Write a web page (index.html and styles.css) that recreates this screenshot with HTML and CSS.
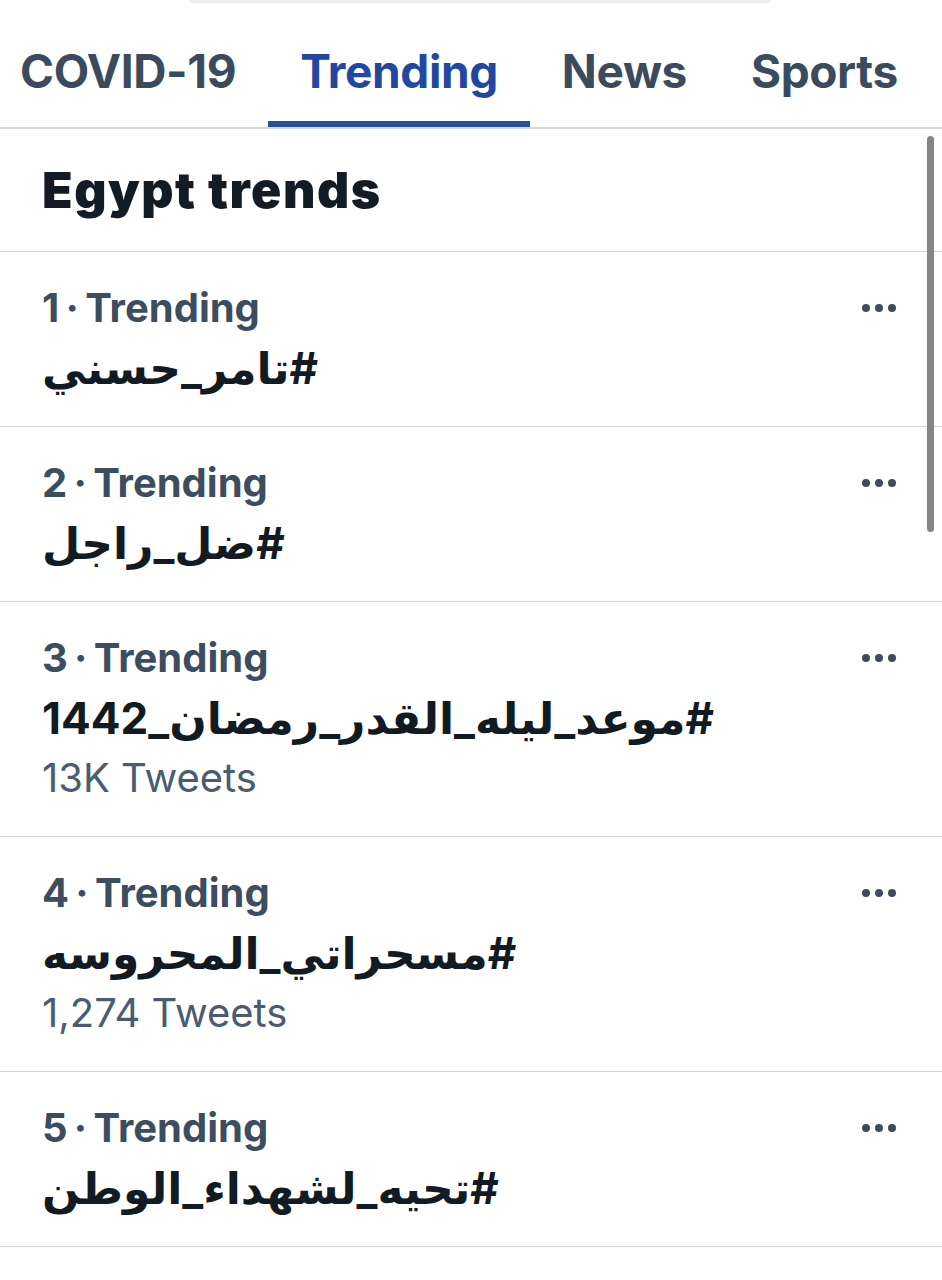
FILE: index.html
```html
<!DOCTYPE html>
<html lang="en">
<head>
<meta charset="utf-8">
<title>Trends</title>
<link rel="stylesheet" href="styles.css">
</head>
<body>
<div class="page">
  <div class="search-edge"></div>
  <nav class="tabs">
    <div class="tab first">COVID-19</div>
    <div class="tab active">Trending</div>
    <div class="tab">News</div>
    <div class="tab">Sports</div>
  </nav>
  <main class="content">
    <div class="scrollbar"></div>
    <h1 class="title">Egypt trends</h1>
    <section class="trend">
      <div class="trend-body">
        <div class="meta">1&#8201;·&#8201;Trending</div>
        <div class="tag"><bdi dir="rtl">#تامر_حسني</bdi></div>
      </div>
      <div class="more"><span></span><span></span><span></span></div>
    </section>
    <section class="trend">
      <div class="trend-body">
        <div class="meta">2&#8201;·&#8201;Trending</div>
        <div class="tag"><bdi dir="rtl">#ضل_راجل</bdi></div>
      </div>
      <div class="more"><span></span><span></span><span></span></div>
    </section>
    <section class="trend">
      <div class="trend-body">
        <div class="meta">3&#8201;·&#8201;Trending</div>
        <div class="tag"><bdi dir="rtl">#موعد_ليله_القدر_رمضان_1442</bdi></div>
        <div class="count">13K Tweets</div>
      </div>
      <div class="more"><span></span><span></span><span></span></div>
    </section>
    <section class="trend">
      <div class="trend-body">
        <div class="meta">4&#8201;·&#8201;Trending</div>
        <div class="tag"><bdi dir="rtl">#مسحراتي_المحروسه</bdi></div>
        <div class="count">1,274 Tweets</div>
      </div>
      <div class="more"><span></span><span></span><span></span></div>
    </section>
    <section class="trend">
      <div class="trend-body">
        <div class="meta">5&#8201;·&#8201;Trending</div>
        <div class="tag"><bdi dir="rtl">#تحيه_لشهداء_الوطن</bdi></div>
      </div>
      <div class="more"><span></span><span></span><span></span></div>
    </section>
  </main>
</div>
</body>
</html>
```
FILE: styles.css
```css
html, body {
  margin: 0;
  padding: 0;
  background: #ffffff;
}

body {
  font-family: "Inter", "DejaVu Sans", "Noto Sans", sans-serif;
  color: #131b24;
  overflow: hidden;
}

.page {
  width: 942px;
  min-height: 1280px;
}

.search-edge {
  width: 580px;
  height: 3px;
  margin-left: 190px;
  background: #ececee;
  border-radius: 0 0 3px 3px;
}

.tabs {
  display: flex;
  align-items: flex-end;
  height: 124px;
  border-bottom: 2px solid #d6d9dc;
  padding-left: 20px;
  white-space: nowrap;
  overflow: hidden;
}

.tab {
  padding: 18px 32px 0;
  height: 100%;
  display: flex;
  align-items: center;
  box-sizing: border-box;
  font-size: 46px;
  font-weight: 700;
  color: #3b4b5e;
  letter-spacing: -0.4px;
  border-bottom: 6px solid transparent;
}

.tab.first {
  padding-left: 0;
}

.tab.active {
  color: #2247a3;
  border-bottom-color: #2b4ea0;
}

.content {
  position: relative;
}

.scrollbar {
  position: absolute;
  right: 8px;
  top: 7px;
  width: 7px;
  height: 396px;
  border-radius: 4px;
  background: #858585;
}

.title {
  margin: 0;
  height: 122px;
  display: flex;
  align-items: center;
  padding: 0 42px;
  font-size: 50px;
  font-weight: 900;
  letter-spacing: 1.5px;
  color: #131b24;
  border-bottom: 1px solid #d3d6da;
}

.trend {
  display: flex;
  align-items: flex-start;
  justify-content: space-between;
  padding: 26px 46px 28px 42px;
  border-bottom: 1px solid #d3d6da;
}

.meta {
  height: 60px;
  line-height: 60px;
  font-size: 40px;
  font-weight: 700;
  color: #3c4d60;
}

.tag {
  height: 60px;
  line-height: 60px;
  font-size: 44px;
  font-weight: 700;
  color: #121a22;
}

.count {
  height: 60px;
  line-height: 60px;
  font-size: 40px;
  font-weight: 400;
  color: #4a5c6f;
}

.more {
  height: 60px;
  display: flex;
  align-items: center;
  gap: 5px;
}

.more span {
  width: 8px;
  height: 8px;
  border-radius: 50%;
  background: #3c4d60;
}
```
